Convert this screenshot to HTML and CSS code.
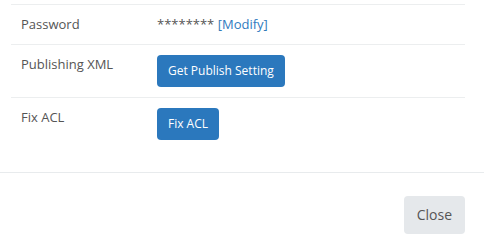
FILE: index.html
```html
<!DOCTYPE html>
<html lang="en">
  <head>
    <meta charset="UTF-8" />
    <title>Site settings</title>
    <link rel="stylesheet" href="styles.css">
  </head>
  <body>
    <div class="modal">
      <div class="modal-body">
        <table class="props">
          <tr>
            <td class="prop-name">Password</td>
            <td class="prop-value">******** <a href="#" class="link">[<span>Modify</span>]</a></td>
          </tr>
          <tr>
            <td class="prop-name">Publishing XML</td>
            <td class="prop-value"><button class="btn btn-primary">Get Publish Setting</button></td>
          </tr>
          <tr>
            <td class="prop-name">Fix ACL</td>
            <td class="prop-value"><button class="btn btn-primary">Fix ACL</button></td>
          </tr>
        </table>
      </div>
      <div class="modal-footer">
        <button class="btn btn-close">Close</button>
      </div>
    </div>
  </body>
</html>
```

FILE: styles.css
```css
body {
  margin: 0;
  background: #fff;
  font-family: "Open Sans", "Liberation Sans", sans-serif;
  font-size: 13px;
  color: #555;
}

.modal {
  width: 484px;
}

.modal-body {
  padding: 4px 19px 22px 11px;
}

.props {
  width: 100%;
  border-collapse: collapse;
  table-layout: fixed;
}

.props td {
  border-top: 1px solid #eceeef;
  padding: 9px 10px 10px;
  line-height: 20px;
  vertical-align: top;
}

.prop-name {
  width: 116px;
}

.link {
  color: #337ab7;
  text-decoration: none;
}

.link span {
  color: #2f7bc0;
}

.btn {
  font-family: inherit;
  border: none;
  border-radius: 4px;
  cursor: pointer;
}

.btn-primary {
  background: #2b78bd;
  color: #fff;
  font-size: 12px;
  line-height: 20px;
  padding: 6px 11px;
  margin-top: 1px;
}

.modal-footer {
  border-top: 1px solid #e8ebed;
  display: flex;
  justify-content: flex-end;
  padding: 23px 19px 15px;
}

.btn-close {
  background: #e5e8eb;
  color: #555;
  font-size: 14px;
  line-height: 20px;
  padding: 9px 13px;
}
```
